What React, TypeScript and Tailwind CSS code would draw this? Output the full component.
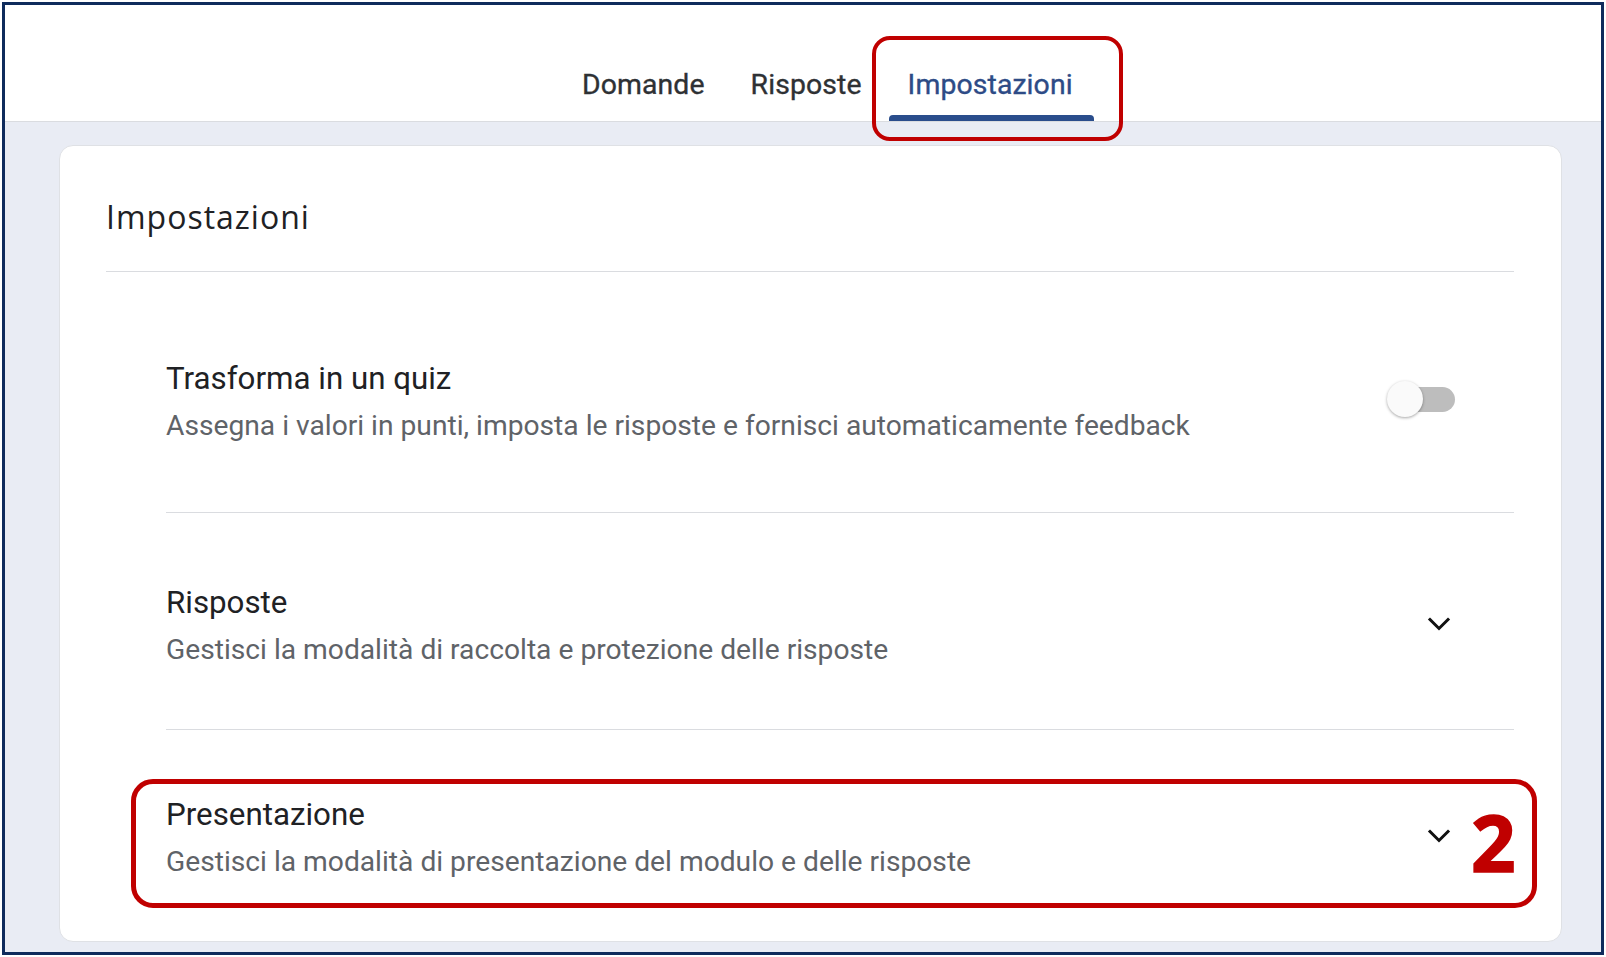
import React from "react"

type Row = {
  title: string
  subtitle: string
  control: "toggle" | "chevron"
  pad: string
}

const rows: Row[] = [
  {
    title: "Trasforma in un quiz",
    subtitle: "Assegna i valori in punti, imposta le risposte e fornisci automaticamente feedback",
    control: "toggle",
    pad: "pt-[84px] pb-[62px] border-b border-[#dadce0]",
  },
  {
    title: "Risposte",
    subtitle: "Gestisci la modalità di raccolta e protezione delle risposte",
    control: "chevron",
    pad: "pt-[67px] pb-[55px] border-b border-[#dadce0]",
  },
  {
    title: "Presentazione",
    subtitle: "Gestisci la modalità di presentazione del modulo e delle risposte",
    control: "chevron",
    pad: "pt-[62px] pb-[48px]",
  },
]

const tabs = ["Domande", "Risposte", "Impostazioni"]

function Toggle() {
  return (
    <div className="relative w-[70px] h-[40px] mr-[-2px] mb-[8px]">
      <div className="absolute right-0 top-[8px] w-[56px] h-[25px] rounded-full bg-[#bdbdbd]" />
      <div className="absolute left-[2px] top-[2px] w-[36px] h-[36px] rounded-full bg-[#fafafa] shadow-[0_1px_3px_rgba(0,0,0,0.35)]" />
    </div>
  )
}

function Chevron() {
  return (
    <svg width="24" height="24" viewBox="0 0 24 24" fill="none" className="mr-[2px] mb-[8px]">
      <path d="M3 8.5 L12 17.5 L21 8.5" stroke="#111" strokeWidth="3" strokeLinecap="square" />
    </svg>
  )
}

export default function App() {
  return (
    <div className="relative w-[1606px] h-[957px] bg-white p-[2px]" style={{ fontFamily: "Roboto, 'Liberation Sans', sans-serif" }}>
      <div className="h-full border-[3px] border-[#0f2b5c] bg-[#e9ecf4] flex flex-col overflow-hidden">
        {/* tabs */}
        <div className="h-[117px] shrink-0 bg-white border-b border-[#dadce0] flex items-end pl-[554px]">
          {tabs.map((t) => {
            const active = t === "Impostazioni"
            return (
              <div key={t} className="relative px-[23px] h-[66px] pt-[12px] flex items-start">
                <span
                  className={`text-[28.4px] leading-[36px] font-normal tracking-[0.1px] [-webkit-text-stroke:0.35px_currentColor] ${
                    active ? "text-[#2d4b86]" : "text-[#2e3134]"
                  }`}
                >
                  {t}
                </span>
                {active && (
                  <div className="absolute left-[4px] right-[2px] bottom-0 h-[6px] rounded-t-[4px] bg-[#2a4d8c]" />
                )}
              </div>
            )
          })}
        </div>

        {/* content */}
        <div className="flex-1 pl-[54px] pr-[39px] pt-[23px] pb-[10px]">
          <div className="h-full bg-white rounded-[14px] border border-[#dfe1e5] pl-[46px] pr-[47px]">
            <div className="pt-[53px] pb-[36px] border-b border-[#dadce0]">
              <h1
                className="text-[32px] leading-[36px] tracking-[1px] text-[#202124]"
                style={{ fontFamily: "'Open Sans', Roboto, sans-serif" }}
              >
                Impostazioni
              </h1>
            </div>
            <div className="pl-[60px]">
              {rows.map((r) => (
                <div key={r.title} className={`flex items-center justify-between pr-[61px] ${r.pad}`}>
                  <div>
                    <div className="text-[31.3px] leading-[46px] text-[#202124]">{r.title}</div>
                    <div className="text-[28.2px] leading-[48px] text-[#5f6368]">{r.subtitle}</div>
                  </div>
                  {r.control === "toggle" ? <Toggle /> : <Chevron />}
                </div>
              ))}
            </div>
          </div>
        </div>
      </div>

      {/* annotations */}
      <div className="absolute left-[872px] top-[36px] w-[251px] h-[105px] rounded-[18px] border-[4px] border-[#c00000]" />
      <div className="absolute left-[131px] top-[779px] w-[1406px] h-[129px] rounded-[22px] border-[5px] border-[#c00000]" />
      <div
        className="absolute left-[1471px] top-[797px] text-[78px] leading-[90px] font-bold text-[#c00000] [-webkit-text-stroke:1.5px_#c00000]"
        style={{ fontFamily: "'Open Sans', 'Liberation Sans', sans-serif" }}
      >
        2
      </div>
    </div>
  )
}
